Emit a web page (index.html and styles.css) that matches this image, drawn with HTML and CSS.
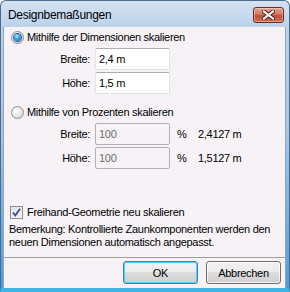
FILE: index.html
```html
<!DOCTYPE html>
<html lang="de">
<head>
    <meta charset="UTF-8">
    <meta name="viewport" content="width=device-width, initial-scale=1.0">
    <title>Designbemaßungen</title>
    <link rel="stylesheet" href="styles.css">
</head>
<body>
    <div class="window">
        <!-- Titelleiste -->
        <div class="titlebar">
            <span class="title">Designbemaßungen</span>
            <button class="close" aria-label="Schließen">
                <svg width="13" height="10" viewBox="0 0 13 10">
                    <path d="M2 1.5 L11 8.5 M11 1.5 L2 8.5" stroke="#4a1a12" stroke-width="4" stroke-linecap="square"/>
                    <path d="M2 1.5 L11 8.5 M11 1.5 L2 8.5" stroke="#ffffff" stroke-width="2.2" stroke-linecap="square"/>
                </svg>
            </button>
        </div>

        <div class="client">
            <!-- Dimensionen -->
            <label class="option"><span class="radio checked"></span>Mithilfe der Dimensionen skalieren</label>
            <div class="fields">
                <div class="field">
                    <span class="field-label">Breite:</span>
                    <span class="edit">2,4 m</span>
                </div>
                <div class="field">
                    <span class="field-label">Höhe:</span>
                    <span class="edit">1,5 m</span>
                </div>
            </div>

            <!-- Prozente -->
            <label class="option option-second"><span class="radio"></span>Mithilfe von Prozenten skalieren</label>
            <div class="fields">
                <div class="field">
                    <span class="field-label">Breite:</span>
                    <span class="edit disabled">100</span>
                    <span class="unit">%</span>
                    <span class="result">2,4127 m</span>
                </div>
                <div class="field">
                    <span class="field-label">Höhe:</span>
                    <span class="edit disabled">100</span>
                    <span class="unit">%</span>
                    <span class="result">1,5127 m</span>
                </div>
            </div>

            <label class="option check-option">
                <span class="checkbox">
                    <svg width="11" height="11" viewBox="0 0 11 11">
                        <path d="M2 5.5 L4.3 8.5 L9 1.8" fill="none" stroke="#3b4f8c" stroke-width="1.8"/>
                    </svg>
                </span>Freihand-Geometrie neu skalieren
            </label>

            <p class="note">Bemerkung: Kontrollierte Zaunkomponenten werden den neuen Dimensionen automatisch angepasst.</p>

            <div class="buttons">
                <button class="btn btn-default">OK</button>
                <button class="btn">Abbrechen</button>
            </div>
        </div>
    </div>
</body>
</html>
```

FILE: styles.css
```css
/* Grundlayout */
body {
    margin: 0;
    padding: 0;
    width: 290px;
    height: 292px;
    font-family: "Liberation Sans", Arial, sans-serif;
    font-size: 11px;
    letter-spacing: -0.3px;
    color: #000;
    background: #ffffff;
}

.window {
    box-sizing: border-box;
    width: 290px;
    height: 292px;
    padding: 0 3px 0 2px;
    display: flex;
    flex-direction: column;
    border: 1px solid #4f6b8c;
    border-bottom: 4px solid #3fb4e4;
    border-radius: 6px 6px 0 0;
    background: linear-gradient(to bottom, #d3e2f2 0, #bcd2ea 26px, #a9c6e6 45%, #4b9be0 100%);
}

/* Titelleiste */
.titlebar {
    height: 26px;
    display: flex;
    align-items: center;
    justify-content: space-between;
    padding: 0 2px 0 5px;
}

.title {
    font-size: 12px;
    letter-spacing: -0.3px;
    color: #000;
    margin-top: 1px;
}

.close {
    width: 31px;
    height: 16px;
    margin-top: 1px;
    padding: 0;
    border: 1px solid #6d2a1f;
    border-radius: 3px;
    display: flex;
    align-items: center;
    justify-content: center;
    background: linear-gradient(to bottom, #e8a493 0, #d47460 45%, #c24d36 55%, #d0705a 100%);
    box-shadow: inset 0 0 0 1px rgba(255, 255, 255, 0.35);
}

/* Inhalt */
.client {
    flex: 1;
    display: flex;
    flex-direction: column;
    padding: 3px 7px 0 7px;
    border: 1px solid #8ea6c4;
    border-top: none;
    border-bottom: none;
    background: #f6f2f6;
}

.option {
    display: flex;
    align-items: center;
    height: 14px;
    gap: 3px;
}

.option-second {
    margin-top: 11px;
}

.check-option {
    margin-top: 36px;
    margin-left: -1px;
    gap: 4px;
}

.radio {
    box-sizing: border-box;
    width: 13px;
    height: 13px;
    border-radius: 50%;
    border: 1px solid #8c8f94;
    background: radial-gradient(circle at 35% 35%, #ffffff 0, #e6e6e6 55%, #c8c8c8 100%);
    display: flex;
    align-items: center;
    justify-content: center;
}

.radio.checked::after {
    content: "";
    width: 7px;
    height: 7px;
    border-radius: 50%;
    background: radial-gradient(circle at 40% 35%, #b8ecff 0, #38a6e4 40%, #1656a8 100%);
    box-shadow: 0 0 0 1px #2d5f9c;
}

.checkbox {
    box-sizing: border-box;
    width: 13px;
    height: 13px;
    border: 1px solid #8e8f8f;
    background: linear-gradient(135deg, #dfe3ea 0, #f4f5f8 100%);
    display: flex;
    align-items: center;
    justify-content: center;
}

.fields {
    display: flex;
    flex-direction: column;
    gap: 2px;
    margin-top: 4px;
}

.field {
    display: flex;
    align-items: center;
    height: 22px;
}

.field-label {
    width: 79px;
    text-align: right;
    margin-right: 5px;
}

.edit {
    box-sizing: border-box;
    width: 75px;
    height: 22px;
    padding: 0 3px;
    display: flex;
    align-items: center;
    background: #ffffff;
    border: 1px solid #e2e3ea;
    border-top-color: #abadb3;
    border-radius: 2px;
}

.edit.disabled {
    background: #f6f2f6;
    color: #6d6d6d;
    border-color: #b5b2b5;
}

.unit {
    margin-left: 7px;
    width: 21px;
}

.result {
    white-space: nowrap;
}

.note {
    margin: 4px 0 0 -2px;
    line-height: 13px;
}

/* Schaltflächen */
.buttons {
    display: flex;
    justify-content: flex-end;
    gap: 8px;
    margin: 8px -7px 0 -7px;
    padding: 3px 4px 0 0;
    border-top: 1px solid #a0a0a0;
}

.btn {
    box-sizing: border-box;
    width: 75px;
    height: 23px;
    padding: 0;
    font-family: "Liberation Sans", Arial, sans-serif;
    font-size: 11px;
    letter-spacing: -0.3px;
    color: #000;
    border: 1px solid #707070;
    border-radius: 3px;
    background: linear-gradient(to bottom, #f2f2f2 0, #ebebeb 50%, #dddddd 50%, #cfcfcf 100%);
    box-shadow: inset 0 0 0 1px rgba(255, 255, 255, 0.7);
}

.btn-default {
    border-color: #3c7fb1;
    box-shadow: inset 0 0 0 1px #48d4ff;
}
```
